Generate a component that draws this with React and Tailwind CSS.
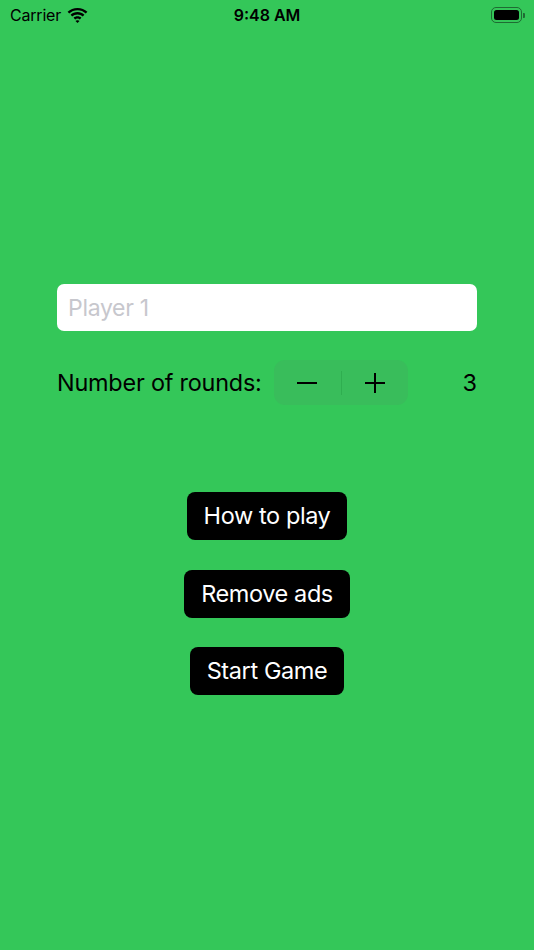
import { useState } from "react";

function Wifi() {
  return (
    <svg width="21" height="15" viewBox="0 0 21 15" className="ml-[6px]">
      <path d="M10.5 2.2c3.2 0 6.1 1.2 8.3 3.3l1.6-1.7C17.8 1.3 14.3 0 10.5 0S3.2 1.3.6 3.8l1.6 1.7C4.4 3.4 7.3 2.2 10.5 2.2z" fill="#000" />
      <path d="M10.5 6.4c2 0 3.9.8 5.3 2.1l1.6-1.7C15.6 5.1 13.1 4.1 10.5 4.1S5.4 5.1 3.6 6.8l1.6 1.7c1.4-1.3 3.3-2.1 5.3-2.1z" fill="#000" />
      <path d="M10.5 10.5c.9 0 1.7.3 2.3.9l1.6-1.7c-1-1-2.4-1.5-3.9-1.5s-2.9.5-3.9 1.5l1.6 1.7c.6-.6 1.4-.9 2.3-.9z" fill="#000" />
      <path d="M10.5 15l2-2c-.5-.5-1.2-.8-2-.8s-1.5.3-2 .8l2 2z" fill="#000" />
    </svg>
  );
}

function Battery() {
  return (
    <div className="flex items-center">
      <div className="w-[31px] h-[16px] rounded-[5px] border-[1.5px] border-[#1f6b33] p-[2px]">
        <div className="w-full h-full rounded-[2.5px] bg-black" />
      </div>
      <div className="w-[2px] h-[5px] rounded-r-[1px] bg-[#1f6b33] ml-[1px]" />
    </div>
  );
}

export default function App() {
  const [rounds, setRounds] = useState(3);
  const btn =
    "h-[48px] px-[17px] rounded-[8px] bg-black text-white text-[23.5px] leading-none tracking-[-0.4px]";

  return (
    <div
      className="w-[534px] h-[950px] bg-[#34c759] text-black"
      style={{ fontFamily: "Inter, 'Liberation Sans', sans-serif" }}
    >
      <div className="relative h-[30px] flex items-center justify-between pl-[10px] pr-[9px]">
        <div className="flex items-center text-[16px] tracking-[-0.2px]">
          Carrier
          <Wifi />
        </div>
        <div className="absolute left-0 right-0 top-0 h-full flex items-center justify-center text-[16px] font-semibold pointer-events-none">
          9:48 AM
        </div>
        <Battery />
      </div>

      <div className="px-[57px] pt-[254px]">
        <input
          placeholder="Player 1"
          className="w-full h-[47px] rounded-[7px] bg-white px-[11px] text-[23px] placeholder-[#c7c7cd] outline-none tracking-[-0.3px]"
        />

        <div className="mt-[29px] flex items-center h-[45px]">
          <span className="text-[23.4px] tracking-[-0.2px] w-[217px]">Number of rounds:</span>
          <div className="flex items-center w-[134px] h-[45px] rounded-[11px] bg-[#39bd5b]">
            <button
              onClick={() => setRounds((r) => Math.max(1, r - 1))}
              className="flex-1 h-full flex items-center justify-center"
            >
              <svg width="20" height="4" viewBox="0 0 20 4">
                <rect x="0" y="1" width="20" height="2" fill="#000" />
              </svg>
            </button>
            <div className="w-px h-[24px] bg-[#2fae50]" />
            <button
              onClick={() => setRounds((r) => r + 1)}
              className="flex-1 h-full flex items-center justify-center"
            >
              <svg width="20" height="20" viewBox="0 0 20 20">
                <rect x="0" y="9" width="20" height="2" fill="#000" />
                <rect x="9" y="0" width="2" height="20" fill="#000" />
              </svg>
            </button>
          </div>
          <span className="ml-auto text-[23.4px]">{rounds}</span>
        </div>
      </div>

      <div className="mt-[87px] flex flex-col items-center gap-[29.5px]">
        <button className={btn}>How to play</button>
        <button className={btn}>Remove ads</button>
        <button className={btn}>Start Game</button>
      </div>
    </div>
  );
}
